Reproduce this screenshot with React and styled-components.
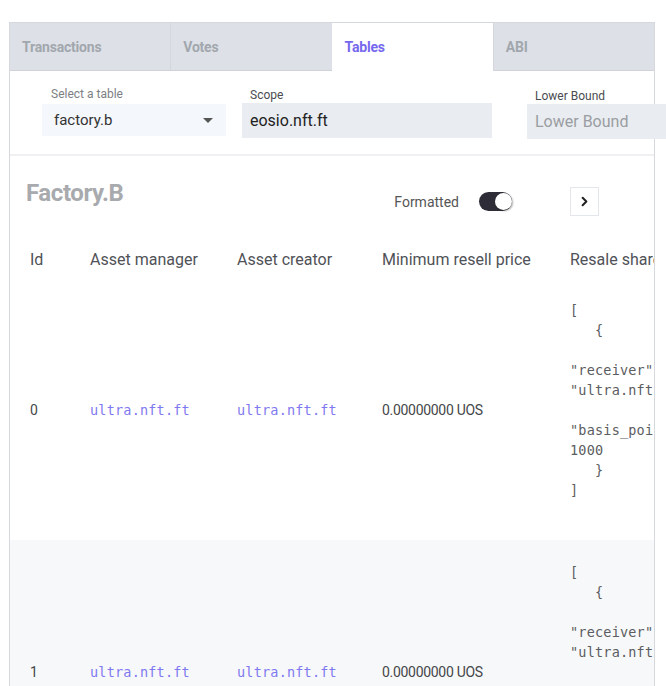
import React, { useState } from 'react'
import styled, { createGlobalStyle } from 'styled-components'
import { ChevronRight } from 'lucide-react'

const GlobalStyle = createGlobalStyle`
    html, body {
        margin: 0;
        padding: 0;
        overflow: hidden;
        background: #ffffff;
        font-family: Roboto, 'Noto Sans', sans-serif;
    }
`

const tabs = ['Transactions', 'Votes', 'Tables', 'ABI']

const columns = [
    { title: 'Id', width: 60 },
    { title: 'Asset manager', width: 147 },
    { title: 'Asset creator', width: 145 },
    { title: 'Minimum resell price', width: 188 },
    { title: 'Resale shares', width: 220 },
]

const resaleJson = [
    '[',
    '   {',
    '      ',
    '"receiver":',
    '"ultra.nft.ft",',
    '      ',
    '"basis_points":',
    '1000',
    '   }',
    ']',
].join('\n')

const rows = [
    { id: 0, manager: 'ultra.nft.ft', creator: 'ultra.nft.ft', price: '0.00000000 UOS' },
    { id: 1, manager: 'ultra.nft.ft', creator: 'ultra.nft.ft', price: '0.00000000 UOS' },
]

const App = () => {
    const [activeTab, setActiveTab] = useState('Tables')
    const [formatted, setFormatted] = useState(true)

    return (
        <Page>
            <GlobalStyle />
            <Panel>
                <TabBar>
                    {tabs.map((tab) => (
                        <Tab key={tab} $active={tab === activeTab} onClick={() => setActiveTab(tab)}>
                            {tab}
                        </Tab>
                    ))}
                </TabBar>

                <Filters>
                    <Field $width={200}>
                        <FieldLabel $muted>Select a table</FieldLabel>
                        <Select>
                            <span>factory.b</span>
                            <Caret />
                        </Select>
                    </Field>
                    <Field $width={285} $offset={1}>
                        <FieldLabel>Scope</FieldLabel>
                        <TextInput defaultValue="eosio.nft.ft" />
                    </Field>
                    <Field $width={160} $offset={2}>
                        <FieldLabel>Lower Bound</FieldLabel>
                        <TextInput placeholder="Lower Bound" />
                    </Field>
                </Filters>

                <TitleRow>
                    <TableTitle>Factory.B</TableTitle>
                    <Controls>
                        <ToggleLabel>Formatted</ToggleLabel>
                        <Toggle $on={formatted} onClick={() => setFormatted(!formatted)}>
                            <Knob $on={formatted} />
                        </Toggle>
                        <PagerButton>
                            <ChevronRight size={15} strokeWidth={3.2} color="#222" />
                        </PagerButton>
                    </Controls>
                </TitleRow>

                <TableScroll>
                    <Table>
                        <colgroup>
                            {columns.map((c) => (
                                <col key={c.title} style={{ width: c.width }} />
                            ))}
                        </colgroup>
                        <thead>
                            <tr>
                                {columns.map((c) => (
                                    <HeadCell key={c.title}>{c.title}</HeadCell>
                                ))}
                            </tr>
                        </thead>
                        <tbody>
                            {rows.map((row, i) => (
                                <BodyRow key={row.id} $striped={i % 2 === 1}>
                                    <Cell>{row.id}</Cell>
                                    <Cell><AccountLink href="#">{row.manager}</AccountLink></Cell>
                                    <Cell><AccountLink href="#">{row.creator}</AccountLink></Cell>
                                    <Cell>{row.price}</Cell>
                                    <Cell><Json>{resaleJson}</Json></Cell>
                                </BodyRow>
                            ))}
                        </tbody>
                    </Table>
                </TableScroll>
            </Panel>
        </Page>
    )
}

const Page = styled.div`
    padding: 22px 0 0 9px;
    width: 666px;
    height: 686px;
    box-sizing: border-box;
`

const Panel = styled.div`
    width: 646px;
    box-sizing: border-box;
    border: 1px solid #d5d8dd;
    border-bottom: none;
    background: #ffffff;
`

const TabBar = styled.div`
    display: flex;
    height: 48px;
    background: #dde1e7;
`

const Tab = styled.div`
    flex: 1;
    display: flex;
    align-items: center;
    box-sizing: border-box;
    padding: 1px 12px 0;
    font-size: 14px;
    font-weight: 700;
    letter-spacing: -0.2px;
    color: ${(p) => (p.$active ? '#7468ee' : '#a2a7ae')};
    background: ${(p) => (p.$active ? '#ffffff' : 'transparent')};
    border-bottom: 1px solid ${(p) => (p.$active ? '#ffffff' : '#cfd3d9')};
    border-left: 1px solid ${(p) => (p.$active ? 'transparent' : '#d3d7dd')};
    cursor: pointer;

    &:first-child {
        border-left: none;
    }
`

const Filters = styled.div`
    display: flex;
    padding: 16px 0 15px 32px;
    border-bottom: 2px solid #eff0f2;
`

const Field = styled.div`
    flex: 0 0 ${(p) => p.$width}px;
    display: flex;
    flex-direction: column;
    padding-top: ${(p) => p.$offset || 0}px;
`

const FieldLabel = styled.label`
    font-size: 12px;
    line-height: 14px;
    padding-left: ${(p) => (p.$muted ? 9 : 8)}px;
    margin-bottom: ${(p) => (p.$muted ? 3 : 1)}px;
    color: ${(p) => (p.$muted ? '#7d7f84' : '#4a4c50')};
`

const Select = styled.div`
    width: 184px;
    height: 32px;
    box-sizing: border-box;
    display: flex;
    align-items: center;
    justify-content: space-between;
    padding: 0 12px 0 12px;
    background: #f4f7fb;
    font-size: 15px;
    color: #333;
`

const Caret = styled.span`
    width: 0;
    height: 0;
    border-left: 5px solid transparent;
    border-right: 5px solid transparent;
    border-top: 5px solid #555;
    margin-right: 1px;
`

const TextInput = styled.input`
    width: 250px;
    height: 35px;
    box-sizing: border-box;
    border: none;
    outline: none;
    padding: 0 8px;
    background: #e9ecf0;
    font-family: Roboto, sans-serif;
    font-size: 16px;
    color: #222;

    &::placeholder {
        color: #9a9da2;
    }
`

const TitleRow = styled.div`
    display: flex;
    align-items: flex-start;
    padding: 23px 55px 20px 16px;
`

const TableTitle = styled.h2`
    flex: 1;
    margin: 0;
    font-size: 24px;
    line-height: 29px;
    font-weight: 700;
    letter-spacing: -0.4px;
    color: #a8aaae;
`

const Controls = styled.div`
    display: flex;
    align-items: center;
    margin-top: 8px;
`

const ToggleLabel = styled.span`
    font-size: 14px;
    color: #555;
    margin-right: 20px;
`

const Toggle = styled.div`
    position: relative;
    width: 33px;
    height: 19px;
    border-radius: 10px;
    background: ${(p) => (p.$on ? '#2e2d37' : '#c4c6ca')};
    margin-right: 58px;
    cursor: pointer;
`

const Knob = styled.span`
    position: absolute;
    top: 1px;
    left: ${(p) => (p.$on ? '16px' : '1px')};
    width: 17px;
    height: 17px;
    border-radius: 50%;
    background: #fff;
    box-shadow: 1px 1px 2px rgba(0, 0, 0, 0.35);
`

const PagerButton = styled.button`
    width: 29px;
    height: 29px;
    padding: 0;
    display: flex;
    align-items: center;
    justify-content: center;
    background: #fff;
    border: 1px solid #e3e6ea;
    cursor: pointer;
`

const TableScroll = styled.div`
    width: 100%;
    overflow: hidden;
`

const Table = styled.table`
    table-layout: fixed;
    width: 760px;
    border-collapse: collapse;
`

const HeadCell = styled.th`
    text-align: left;
    font-weight: 400;
    font-size: 16px;
    line-height: 19px;
    color: #505257;
    padding: 14px 20px 9px;
    white-space: nowrap;
`

const BodyRow = styled.tr`
    background: ${(p) => (p.$striped ? '#f7f8fa' : '#ffffff')};
`

const Cell = styled.td`
    padding: 22px 20px 20px;
    vertical-align: middle;
    font-size: 14px;
    letter-spacing: -0.3px;
    color: #454749;
    white-space: nowrap;
`

const AccountLink = styled.a`
    font-family: 'DejaVu Sans Mono', 'Liberation Mono', monospace;
    font-size: 13.5px;
    letter-spacing: 0.2px;
    color: #7f79f0;
    text-decoration: none;
`

const Json = styled.pre`
    margin: 0 0 20px;
    font-family: 'DejaVu Sans Mono', 'Liberation Mono', monospace;
    font-size: 13.5px;
    letter-spacing: 0.2px;
    line-height: 20px;
    color: #5b5d61;
    white-space: pre;
`

export default App
